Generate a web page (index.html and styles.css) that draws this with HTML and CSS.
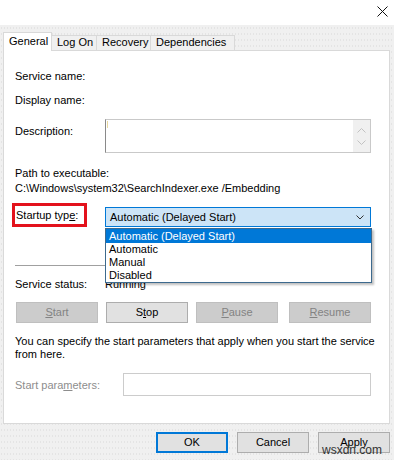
FILE: index.html
```html
<!DOCTYPE html>
<html>
<head>
<meta charset="utf-8">
<title>Service Properties</title>
<link rel="stylesheet" href="styles.css">
</head>
<body>
<div class="titlebar">
  <svg class="close" width="11" height="11" viewBox="0 0 11 11"><path d="M0.5 0.5L10.5 10.5M10.5 0.5L0.5 10.5" stroke="#111" stroke-width="1" fill="none"/></svg>
</div>
<div class="window">
  <div class="tabs">
    <div class="tab active t-general">General</div>
    <div class="tab t-logon">Log On</div>
    <div class="tab t-recovery">Recovery</div>
    <div class="tab t-deps">Dependencies</div>
  </div>
  <div class="panel">
    <div class="line r1">Service name:</div>
    <div class="line r2">Display name:</div>
    <div class="desc-row">
      <div class="label desc-label">Description:</div>
      <div class="textbox">
        <div class="caret"></div>
        <div class="sb">
          <svg width="9" height="5" viewBox="0 0 9 5"><path d="M0.5 4.5L4.5 0.5L8.5 4.5" stroke="#c2c2c2" fill="none"/></svg>
          <svg width="9" height="5" viewBox="0 0 9 5"><path d="M0.5 0.5L4.5 4.5L8.5 0.5" stroke="#c2c2c2" fill="none"/></svg>
        </div>
      </div>
    </div>
    <div class="line r4">Path to executable:</div>
    <div class="line r5">C:\Windows\system32\SearchIndexer.exe /Embedding</div>
    <div class="startup-row">
      <div class="redbox">Startup typ<u>e</u>:</div>
      <div class="combo">
        <span>Automatic (Delayed Start)</span>
        <svg width="8" height="5" viewBox="0 0 8 5"><path d="M0.5 0.5L4 4L7.5 0.5" stroke="#333" fill="none"/></svg>
      </div>
      <div class="dropdown">
        <div class="opt sel">Automatic (Delayed Start)</div>
        <div class="opt">Automatic</div>
        <div class="opt">Manual</div>
        <div class="opt">Disabled</div>
      </div>
    </div>
    <div class="sep"></div>
    <div class="status-row">
      <span class="label">Service status:</span>
      <span>Running</span>
    </div>
    <div class="btn-row">
      <div class="btn disabled"><u>S</u>tart</div>
      <div class="btn">S<u>t</u>op</div>
      <div class="btn disabled"><u>P</u>ause</div>
      <div class="btn disabled"><u>R</u>esume</div>
    </div>
    <p class="info">You can specify the start parameters that apply when you start the service<br>from here.</p>
    <div class="params-row">
      <span class="label muted">Start para<u>m</u>eters:</span>
      <div class="input"></div>
    </div>
  </div>
  <div class="footer">
    <div class="fbtn default">OK</div>
    <div class="fbtn">Cancel</div>
    <div class="fbtn">Apply</div>
  </div>
  <div class="watermark">wsxdn.com</div>
</div>
</body>
</html>
```

FILE: styles.css
```css
body {
  margin: 0;
  width: 394px;
  height: 460px;
  overflow: hidden;
  font-family: "Liberation Sans", Arial, sans-serif;
  font-size: 11px;
  line-height: 14px;
  color: #000;
  background: #f0f0f0;
}

.titlebar {
  height: 25px;
  background: #fff;
  display: flex;
  justify-content: flex-end;
  align-items: flex-start;
  padding: 6px 6px 0 0;
  box-sizing: border-box;
}

.window {
  position: relative;
  height: 435px;
  box-sizing: border-box;
  padding: 7px 4px 0 3px;
  background-color: #f0f0f0;
  background-image: radial-gradient(circle, #e4e4e4 0.6px, transparent 1px);
  background-size: 3px 6px;
}

.tabs {
  display: flex;
  align-items: flex-end;
  height: 18px;
}

.tab {
  box-sizing: border-box;
  height: 15px;
  border: 1px solid #d9d9d9;
  border-bottom: none;
  background: #f0f0f0;
  margin-left: -1px;
  padding-left: 5px;
  line-height: 13px;
}

.tab.active {
  height: 19px;
  margin-left: 0;
  margin-bottom: -1px;
  background: #fff;
  position: relative;
  z-index: 1;
  line-height: 17px;
}

.t-general { width: 49px; }
.t-logon { width: 46px; }
.t-recovery { width: 55px; }
.t-deps { width: 85px; }

.panel {
  box-sizing: border-box;
  width: 387px;
  height: 374px;
  border: 1px solid #d9d9d9;
  background: #fff;
  padding: 0 18px 0 11px;
}

.line { height: 14px; white-space: nowrap; }
.r1 { margin-top: 18px; }
.r2 { margin-top: 10px; }
.r4 { margin-top: 13px; }
.r5 { margin-top: 1px; }

.label { width: 90px; flex: none; }

.desc-row {
  display: flex;
  margin-top: 12px;
  height: 34px;
}
.desc-label { padding-top: 5px; }

.textbox {
  position: relative;
  box-sizing: border-box;
  width: 266px;
  height: 34px;
  border: 1px solid #c9c9c9;
  border-left-color: #8a8a8a;
  display: flex;
  justify-content: flex-end;
}
.caret {
  position: absolute;
  left: 1px;
  top: 1px;
  width: 1px;
  height: 7px;
  background: #e8d9a0;
}
.sb {
  width: 17px;
  height: 100%;
  background: #f0f0f0;
  display: flex;
  flex-direction: column;
  align-items: center;
  justify-content: center;
  gap: 7px;
}

.startup-row {
  position: relative;
  display: flex;
  margin-top: 8px;
  height: 24px;
}
.redbox {
  box-sizing: border-box;
  width: 75px;
  height: 24px;
  margin-left: -3px;
  border: 3px solid #e3121c;
  padding-left: 1px;
  line-height: 18px;
  white-space: nowrap;
}
.combo {
  box-sizing: border-box;
  margin-left: 18px;
  margin-top: 4px;
  width: 266px;
  height: 20px;
  border: 1px solid #0078d7;
  background: #cce4f7;
  display: flex;
  align-items: center;
  justify-content: space-between;
  padding: 0 6px 0 4px;
}
.dropdown {
  position: absolute;
  left: 90px;
  top: 25px;
  width: 267px;
  box-sizing: border-box;
  border: 1px solid #3d6a8e;
  background: #fff;
  box-shadow: 2px 2px 2px rgba(0, 0, 0, 0.25);
  z-index: 2;
}
.opt {
  height: 13px;
  line-height: 13px;
  padding-left: 3px;
}
.opt.sel {
  height: 14px;
  line-height: 14px;
  background: #0078d7;
  color: #fff;
}

.sep {
  margin-top: 38px;
  height: 1px;
  background: #a0a0a0;
}

.status-row {
  display: flex;
  margin-top: 11px;
  height: 14px;
}

.btn-row {
  display: flex;
  margin-top: 11px;
  height: 21px;
}
.btn {
  box-sizing: border-box;
  height: 21px;
  width: 82px;
  margin-left: 8px;
  border: 1px solid #adadad;
  background: #e1e1e1;
  text-align: center;
  line-height: 19px;
}
.btn:first-child { margin-left: 1px; }
.btn:last-child { margin-left: 11px; }
.btn.disabled {
  background: #cccccc;
  border-color: #bfbfbf;
  color: #838383;
}

.info {
  margin: 12px 0 0 0;
  line-height: 13px;
  white-space: nowrap;
}

.params-row {
  display: flex;
  align-items: center;
  margin-top: 12px;
  height: 23px;
}
.params-row .label { width: 108px; }
.muted { color: #8d8d8d; }
.input {
  box-sizing: border-box;
  width: 248px;
  height: 23px;
  border: 1px solid #cccccc;
  background: #fff;
}

.footer {
  display: flex;
  justify-content: flex-end;
  gap: 9px;
  margin-top: 8px;
}
.fbtn {
  box-sizing: border-box;
  width: 72px;
  height: 21px;
  border: 1px solid #adadad;
  background: #e1e1e1;
  text-align: center;
  line-height: 19px;
}
.fbtn.default {
  border: 2px solid #0078d7;
  line-height: 17px;
}

.watermark {
  position: absolute;
  left: 322px;
  top: 418px;
  font-size: 12px;
  line-height: 14px;
  color: #333;
}
```
